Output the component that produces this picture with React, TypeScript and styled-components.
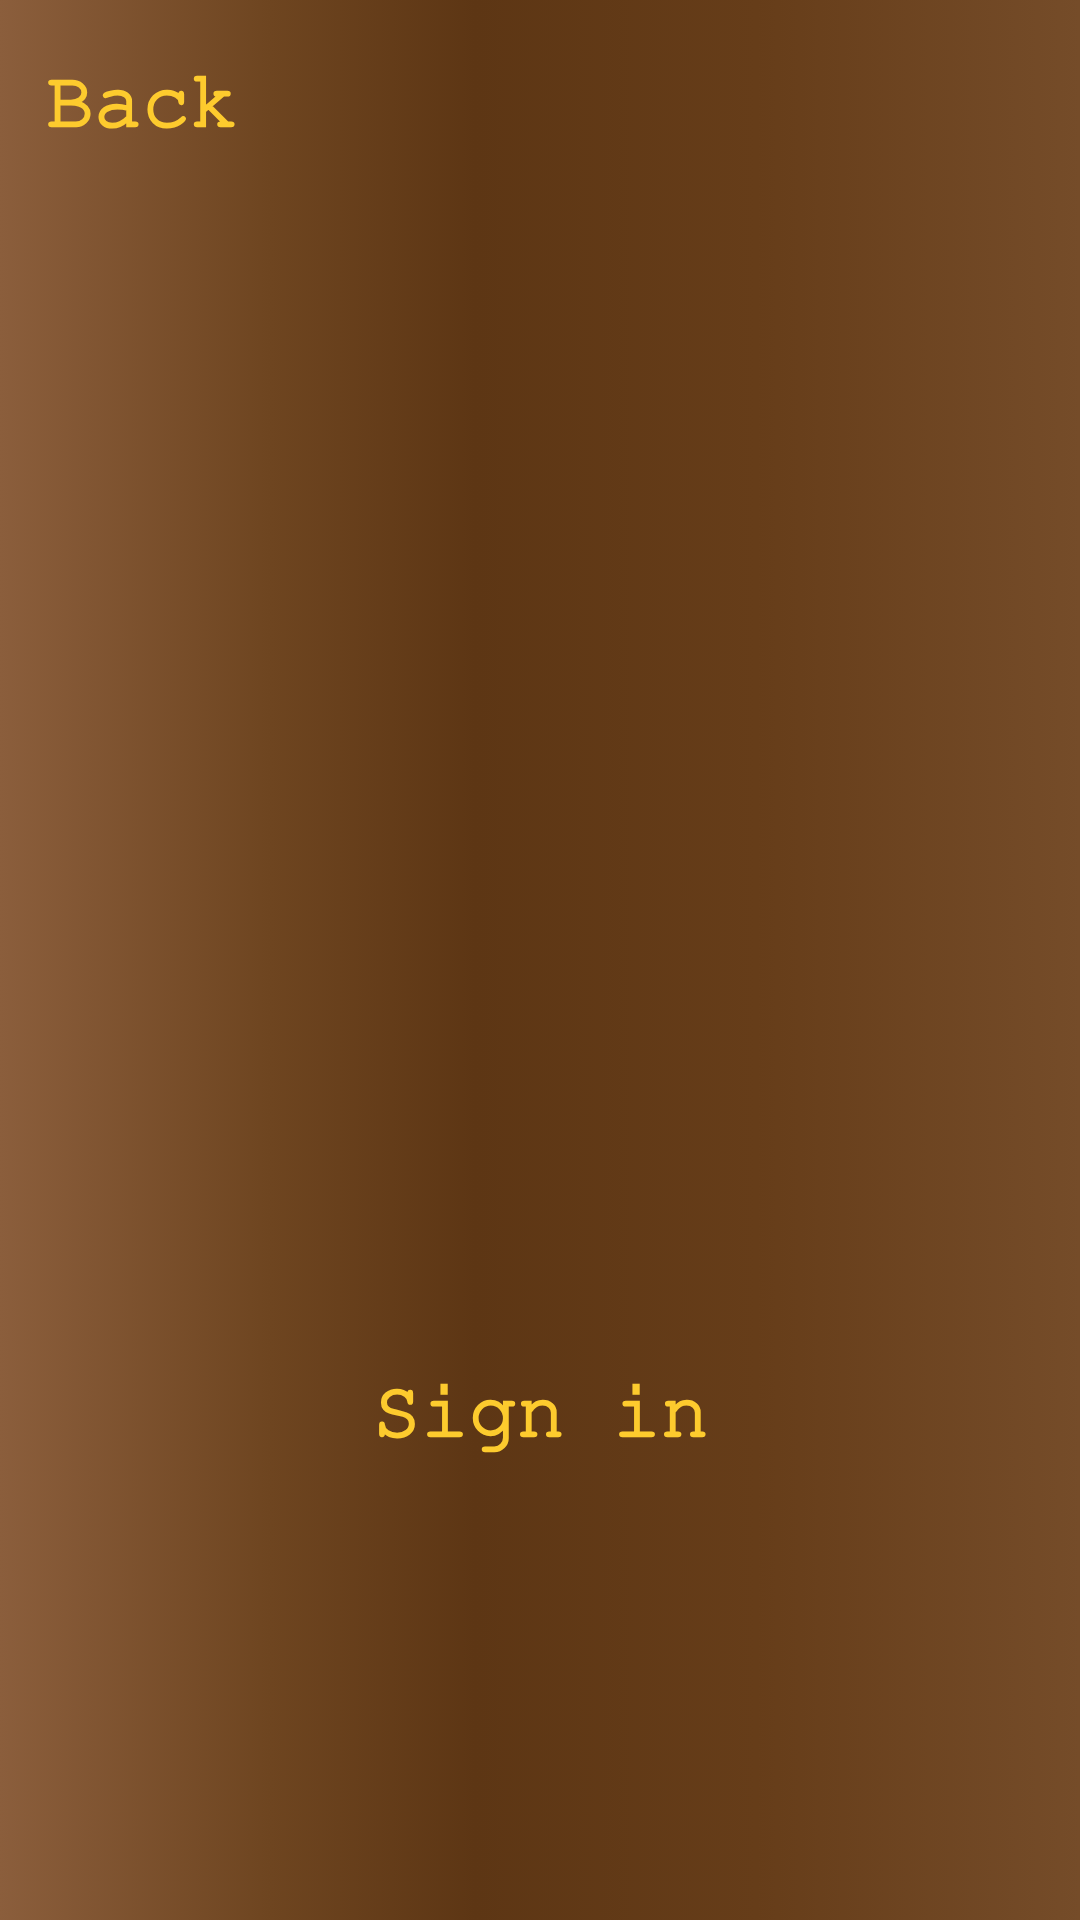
import React from "react";
import styled, { createGlobalStyle } from "styled-components";

const Global = createGlobalStyle`
  html, body { margin: 0; padding: 0; }
  body { font-family: FreeMono, "TeX Gyre Cursor", "Liberation Mono", monospace; }
`;

const Screen = styled.div`
  width: 1080px;
  height: 1920px;
  box-sizing: border-box;
  display: flex;
  flex-direction: column;
  background: linear-gradient(to right, #8b5e3c 0%, #6e4520 25%, #5d3614 44%, #663d19 70%, #754c29 100%);
  padding: 62px 0 0 46px;
`;

const Label = styled.div`
  color: #fdcb2e;
  font-size: 80px;
  line-height: 1;
  -webkit-text-stroke: 2.5px #fdcb2e;
  white-space: pre;
`;

const BackLink = styled(Label)`
  align-self: flex-start;
`;

const SignIn = styled(Label)`
  align-self: center;
  margin-top: 1230px;
  margin-left: -44px;
`;

export default function App() {
  return (
    <>
      <Global />
      <Screen>
        <BackLink>Back</BackLink>
        <SignIn>Sign in</SignIn>
      </Screen>
    </>
  );
}
